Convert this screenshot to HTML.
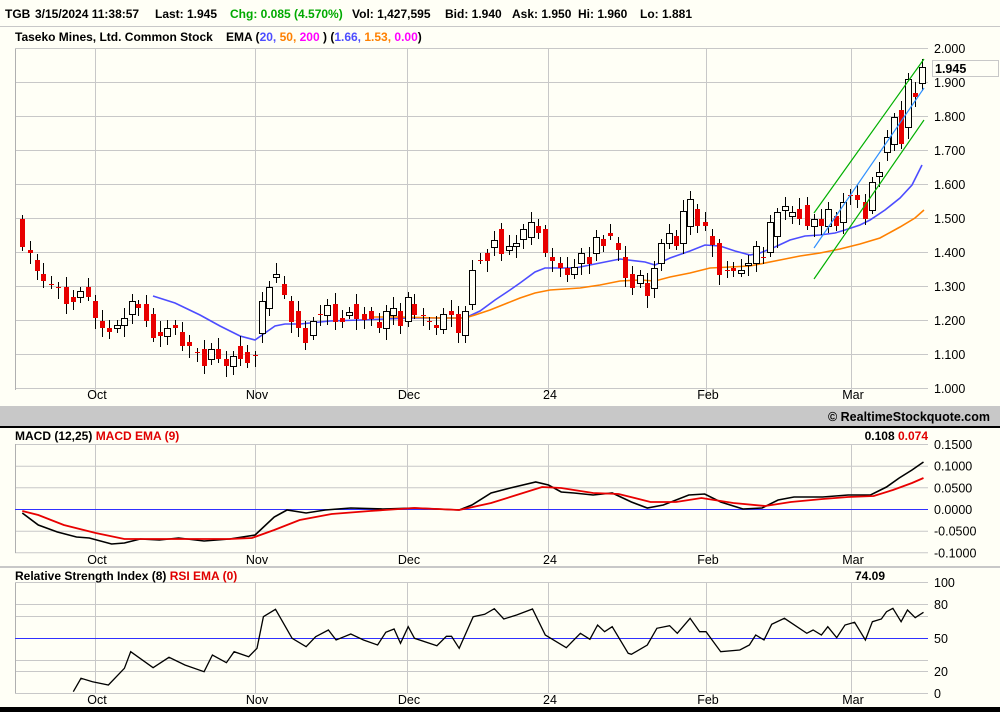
<!DOCTYPE html><html><head><meta charset="utf-8"><style>
html,body{margin:0;padding:0;background:#fffff6;width:1000px;height:712px;overflow:hidden}
svg{display:block;font-family:"Liberation Sans",sans-serif}
</style></head><body>
<svg id="s" width="1000" height="712" xmlns="http://www.w3.org/2000/svg">
<rect width="1000" height="712" fill="#fffff6"/>
<g font-size="12" font-weight="bold">
<text x="5" y="18">TGB</text>
<text x="35" y="18">3/15/2024 11:38:57</text>
<text x="155" y="18">Last: 1.945</text>
<text x="230" y="18" fill="#00aa00">Chg: 0.085 (4.570%)</text>
<text x="352" y="18">Vol: 1,427,595</text>
<text x="445" y="18">Bid: 1.940</text>
<text x="512" y="18">Ask: 1.950</text>
<text x="578" y="18">Hi: 1.960</text>
<text x="640" y="18">Lo: 1.881</text>
</g>
<line x1="0" y1="26.5" x2="1000" y2="26.5" stroke="#c8c8c8"/>
<text x="15" y="41" font-size="12" font-weight="bold">Taseko Mines, Ltd. Common Stock</text>
<text x="226" y="41" font-size="12" font-weight="bold">EMA (<tspan fill="#4d4dff">20,</tspan> <tspan fill="#ff8000">50,</tspan> <tspan fill="#ff00ff">200</tspan> )  (<tspan fill="#4d4dff">1.66,</tspan> <tspan fill="#ff8000">1.53,</tspan> <tspan fill="#ff00ff">0.00</tspan>)</text>
<g id="g"></g>
<rect x="0" y="406" width="1000" height="20" fill="#c8c8c8"/>
<text x="990" y="421" font-size="12.5" font-weight="bold" text-anchor="end">© RealtimeStockquote.com</text>
<rect x="0" y="426" width="1000" height="2" fill="#000"/>
<text x="15" y="440" font-size="12" font-weight="bold">MACD (12,25) <tspan fill="#e00000">MACD EMA (9)</tspan></text>
<text x="928" y="440" font-size="12" font-weight="bold" text-anchor="end">0.108 <tspan fill="#e00000">0.074</tspan></text>
<rect x="0" y="566" width="1000" height="2" fill="#c8c8c8"/>
<text x="15" y="580" font-size="12" font-weight="bold">Relative Strength Index (8) <tspan fill="#e00000">RSI EMA (0)</tspan></text>
<text x="885" y="580" font-size="12" font-weight="bold" text-anchor="end">74.09</text>
<rect x="0" y="707" width="1000" height="5" fill="#000"/>
</svg>
<script>
var g=document.getElementById("g"),h="";
function L(x1,y1,x2,y2,c,w){h+='<line x1="'+x1+'" y1="'+y1+'" x2="'+x2+'" y2="'+y2+'" stroke="'+c+'" stroke-width="'+(w||1)+'"/>';}
function T(x,y,t,a,extra){h+='<text x="'+x+'" y="'+y+'" font-size="12.5" '+(a?'text-anchor="'+a+'" ':'')+(extra||'')+'>'+t+'</text>';}
function P(pts,c,w){h+='<polyline fill="none" stroke="'+c+'" stroke-width="'+w+'" points="'+pts.map(function(p){return p.join(",")}).join(" ")+'"/>';}
var months=[[95,"Oct"],[255,"Nov"],[407,"Dec"],[548,"24"],[706,"Feb"],[851,"Mar"]];
var GC="#c8c8c8";
for(var k=0;k<=10;k++){var y=388-34*k;L(15,y+.5,928,y+.5,GC);T(934,y+5,(1+k/10).toFixed(3));}
months.forEach(function(m){L(m[0]+.5,48,m[0]+.5,398,GC);T(m[0]+2,399,m[1],"middle",'font-size="11"');});
L(15.5,48,15.5,390,"#b0b0b0");L(15,48.5,928,48.5,GC);
var my=[444,465.7,487.3,509,530.7,552.3],ml=["0.1500","0.1000","0.0500","0.0000","-0.0500","-0.1000"];
my.forEach(function(y,i){if(i!=3)L(15,y+.5,928,y+.5,GC);T(934,y+5,ml[i]);});
months.forEach(function(m){L(m[0]+.5,444,m[0]+.5,553,GC);T(m[0]+2,564,m[1],"middle",'font-size="11"');});
L(15.5,444,15.5,553,"#b0b0b0");L(15,509.5,928,509.5,"#3030ff");
[[582,"100"],[604,"80"],[616,""],[660,""],[671,"20"],[693,"0"]].forEach(function(r){L(15,r[0]+.5,928,r[0]+.5,GC);if(r[1])T(934,r[0]+5,r[1]);});
T(934,643,"50");
months.forEach(function(m){L(m[0]+.5,583,m[0]+.5,693,GC);T(m[0]+2,704,m[1],"middle",'font-size="11"');});
L(15.5,583,15.5,693,"#b0b0b0");L(15,638.5,928,638.5,"#3030ff");
P([[153,296],[175,303],[200,315],[220,326],[240,336],[255,340],[265,333],[275,326],[285,324],[300,324],[330,321],[360,320],[410,318],[440,318],[465,318],[480,311],[495,300],[510,290],[520,283],[535,272],[545,268],[555,268],[575,268],[600,263],[620,259],[645,262],[655,265],[670,258],[690,251],[705,245],[720,246],[735,251],[750,255],[760,253],[775,247],[790,240],[805,236],[820,235],[835,233],[845,230],[860,225],[870,220],[885,210],[900,198],[912,185],[922,165]],"#4d4dff",1.6);
P([[372,317],[400,317],[440,318],[465,318],[475,315],[490,310],[505,304],[520,298],[535,293],[550,290],[565,289],[580,288],[600,285],[620,281],[640,280],[655,281],[670,277],[690,273],[710,268],[730,267],[750,266],[760,264],[780,260],[800,256],[820,253],[840,249],[860,244],[880,238],[900,227],[915,218],[924,210]],"#ff8000",1.6);
var C=[[22,219,247,'r'],[30,250,253,'r'],[37,260,271,'r'],[43,274,281,'r'],[51,284,284,'d'],[58,287,287,'d'],[66,287,304,'r'],[73,297,302,'r'],[80,291,297,'w'],[88,287,297,'r'],[95,301,318,'r'],[102,321,328,'r'],[109,328,332,'r'],[117,325,328,'w'],[124,318,325,'w'],[132,301,314,'w'],[138,304,308,'r'],[146,304,321,'r'],[153,314,338,'r'],[160,332,336,'r'],[167,328,336,'w'],[175,325,328,'r'],[182,332,346,'r'],[189,342,346,'r'],[197,352,352,'d'],[204,349,366,'r'],[211,349,359,'w'],[218,349,359,'r'],[226,359,366,'r'],[233,356,366,'w'],[240,346,359,'r'],[247,352,363,'r'],[255,355,355,'d'],[262,301,333,'w'],[269,287,308,'w'],[276,274,277,'w'],[284,284,295,'r'],[291,301,322,'r'],[298,311,328,'r'],[305,328,343,'r'],[313,321,335,'w'],[320,314,314,'d'],[327,305,315,'w'],[335,304,322,'r'],[342,318,322,'r'],[349,312,315,'w'],[356,304,319,'r'],[364,314,320,'r'],[371,311,319,'r'],[379,322,328,'r'],[386,311,328,'w'],[393,308,315,'w'],[400,311,326,'r'],[408,297,321,'w'],[414,304,315,'r'],[423,315,315,'d'],[429,321,321,'d'],[436,325,328,'r'],[443,314,329,'w'],[451,311,315,'r'],[458,314,333,'r'],[465,311,335,'w'],[472,270,304,'w'],[480,260,260,'d'],[487,253,261,'r'],[494,240,247,'w'],[501,229,254,'r'],[509,246,250,'w'],[516,243,246,'w'],[523,229,239,'w'],[531,222,237,'w'],[538,226,233,'r'],[545,229,253,'r'],[552,257,261,'r'],[560,263,268,'r'],[567,268,275,'r'],[574,267,274,'w'],[581,253,263,'w'],[589,257,264,'r'],[596,237,253,'w'],[603,239,246,'r'],[610,233,236,'r'],[618,243,250,'r'],[625,257,278,'r'],[632,274,288,'r'],[640,275,283,'w'],[647,283,296,'r'],[654,268,288,'w'],[661,243,263,'w'],[669,233,243,'w'],[676,236,246,'r'],[683,211,243,'w'],[690,199,226,'w'],[697,209,226,'r'],[705,222,226,'r'],[712,236,245,'r'],[719,243,275,'r'],[727,270,270,'d'],[733,268,271,'r'],[741,270,273,'w'],[748,263,265,'w'],[756,246,263,'w'],[763,257,257,'d'],[770,222,252,'w'],[777,212,236,'w'],[785,206,210,'w'],[792,212,216,'w'],[799,209,219,'r'],[807,205,226,'r'],[814,219,226,'w'],[821,219,226,'r'],[828,209,226,'w'],[836,216,226,'r'],[843,202,222,'w'],[850,195,195,'d'],[857,195,200,'r'],[865,202,219,'r'],[872,182,210,'w'],[879,172,176,'w'],[887,137,152,'w'],[894,117,144,'w'],[901,110,144,'r'],[908,79,127,'w'],[915,93,97,'r'],[922,67,83,'w']];
C.forEach(function(c,i){var x=c[0],a=c[1],b=c[2],wl=4+(i*7%9),wh=4+(i*5%8);
 L(x+.5,a-wh,x+.5,b+wl,"#000");
 if(c[3]=='r')h+='<rect x="'+(x-2)+'" y="'+a+'" width="5" height="'+Math.max(b-a,2)+'" fill="#e80000"/>';
 else if(c[3]=='w')h+='<rect x="'+(x-2.5)+'" y="'+(a+.5)+'" width="6" height="'+Math.max(b-a,2)+'" fill="#fffff6" stroke="#000" stroke-width="1"/>';
 else L(x-2,a+.5,x+3,a+.5,"#e80000");
});
L(814,213,924,59,"#00b000",1.2);L(814,279,924,120,"#00b000",1.2);L(814,248,924,88,"#3090ff",1.2);
h+='<rect x="932.5" y="60.5" width="66" height="16" fill="#fffff6" stroke="#c8c8c8"/>';
T(935,73,"1.945",null,'font-weight="bold"');
function sc(a){return a.map(function(p){return [(p[0]/1.568).toFixed(1),p[1]]});}
P(sc([[35,513],[60,525],[90,532],[120,537],[140,538],[175,544],[195,543],[220,539],[250,540],[280,538],[320,541],[360,539],[400,535],[430,517],[450,510],[480,513],[510,510],[550,508],[600,509],[650,508],[720,510],[740,505],[770,493],[800,488],[840,482],[860,485],[880,492],[900,493],[930,495],[960,493],[990,502],[1015,508],[1040,505],[1080,495],[1105,494],[1130,502],[1165,509],[1195,508],[1220,500],[1245,497],[1290,497],[1330,495],[1365,495],[1390,487],[1410,478],[1430,470],[1448,462]]),"#000",1.6);
P(sc([[35,511],[60,515],[100,525],[150,533],[195,539],[250,539],[300,539],[360,539],[395,538],[430,530],[470,520],[520,514],[580,511],[650,508],[720,510],[770,503],[810,495],[850,487],[880,488],[930,493],[970,494],[1020,502],[1060,502],[1100,498],[1150,503],[1200,506],[1240,502],[1290,499],[1330,497],[1370,496],[1400,490],[1430,483],[1448,478]]),"#e80000",1.8);
var R=[[115,800],[127,760],[145,770],[170,780],[195,730],[205,680],[240,728],[265,697],[290,720],[320,740],[333,690],[355,713],[367,680],[390,695],[403,670],[413,575],[432,553],[458,640],[480,665],[495,635],[515,615],[527,645],[550,627],[570,645],[592,660],[605,622],[618,612],[628,655],[640,605],[650,640],[685,662],[700,634],[708,634],[720,670],[742,575],[760,568],[775,551],[790,582],[810,570],[835,552],[855,630],[888,668],[910,625],[925,643],[937,600],[948,620],[960,605],[985,685],[990,688],[1015,660],[1030,610],[1050,602],[1062,625],[1082,580],[1097,620],[1107,620],[1130,680],[1160,675],[1175,660],[1185,630],[1198,645],[1210,598],[1230,580],[1265,625],[1275,615],[1288,630],[1298,605],[1312,638],[1325,600],[1340,592],[1357,645],[1368,590],[1382,582],[1390,560],[1400,550],[1413,590],[1423,555],[1435,578],[1448,562]].map(function(p){return [(p[0]/1.568).toFixed(1),(425+p[1]/3).toFixed(1)]});
P(R,"#000",1.3);
g.innerHTML=h;
</script>
</body></html>
